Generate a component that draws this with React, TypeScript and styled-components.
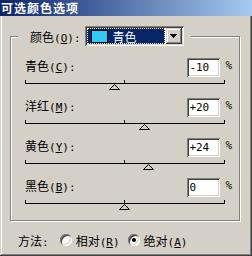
import React from "react";
import styled, { createGlobalStyle } from "styled-components";

interface Channel {
  name: string;
  hotkey: string;
  value: number;
}

const CHANNELS: Channel[] = [
  { name: "青色", hotkey: "C", value: -10 },
  { name: "洋红", hotkey: "M", value: 20 },
  { name: "黄色", hotkey: "Y", value: 24 },
  { name: "黑色", hotkey: "B", value: 0 },
];

// track is 200px wide, value range -100..100, thumb is 11px wide
const TRACK_CENTER = 99;
const THUMB_HALF = 5;

const formatValue = (v: number) => (v > 0 ? `+${v}` : `${v}`);

const GlobalStyle = createGlobalStyle`
  html, body {
    margin: 0;
    padding: 0;
    background: #d4d0c8;
  }
  body {
    font-family: "Noto Sans CJK SC", "DejaVu Sans", sans-serif;
    font-size: 12px;
    color: #000;
  }
`;

const App = () => {
  return (
    <>
      <GlobalStyle />
      <Window>
        <TitleBar>可选颜色选项</TitleBar>
        <Group>
          <Legend>
            <LegendRow>
              <span>
                颜色
                <Hint>
                  (<u>O</u>):
                </Hint>
              </span>
              <Select>
                <SelectValue>
                  <Swatch />
                  <span>青色</span>
                </SelectValue>
                <ArrowButton>
                  <svg width="7" height="4" viewBox="0 0 7 4" shapeRendering="crispEdges">
                    <polygon points="0,0 7,0 3.5,4" fill="#000" />
                  </svg>
                </ArrowButton>
              </Select>
            </LegendRow>
          </Legend>
          {CHANNELS.map((c) => (
            <Row key={c.hotkey}>
              <RowHeader>
                <ChannelLabel>
                  {c.name}
                  <Hint>
                    (<u>{c.hotkey}</u>):
                  </Hint>
                </ChannelLabel>
                <ValueBox>{formatValue(c.value)}</ValueBox>
                <Percent>%</Percent>
              </RowHeader>
              <Track>
                <Thumb style={{ left: TRACK_CENTER - 1 + c.value - THUMB_HALF }}>
                  <svg width="11" height="6" viewBox="0 0 11 6">
                    <polygon
                      points="5.5,0.5 10.5,5.5 0.5,5.5"
                      fill="#d4d0c8"
                      stroke="#000"
                      strokeWidth="1"
                    />
                  </svg>
                </Thumb>
              </Track>
            </Row>
          ))}
        </Group>
        <Footer>
          <span>
            方法<Hint>:</Hint>
          </span>
          <RadioOption $first>
            <Radio />
            <span>
              相对
              <Hint>
                (<u>R</u>)
              </Hint>
            </span>
          </RadioOption>
          <RadioOption>
            <Radio $checked />
            <span>
              绝对
              <Hint>
                (<u>A</u>)
              </Hint>
            </span>
          </RadioOption>
        </Footer>
      </Window>
    </>
  );
};

export default App;

const Window = styled.div`
  width: 252px;
  height: 256px;
  box-sizing: border-box;
  background: #d4d0c8;
  box-shadow: inset -1px -1px 0 #404040, inset 1px 1px 0 #d4d0c8,
    inset -2px -2px 0 #808080, inset 2px 2px 0 #fff;
  overflow: hidden;
`;

const TitleBar = styled.div`
  height: 16px;
  line-height: 16px;
  padding-left: 1px;
  background: linear-gradient(to right, #0a246a, #a6caf0);
  color: #fff;
  font-weight: bold;
  letter-spacing: 1px;
  white-space: nowrap;
`;

const Hint = styled.span`
  font-family: "DejaVu Sans Mono", monospace;
  font-size: 11px;
`;

const Group = styled.fieldset`
  width: 230px;
  box-sizing: border-box;
  min-width: 0;
  margin: 10px 0 0 10px;
  padding: 12px 7px 2px 14px;
  border: 1px solid #808080;
  box-shadow: 1px 1px 0 #fff, inset 1px 1px 0 #fff;
`;

const Legend = styled.legend`
  margin-left: -7px;
  padding: 0 7px 0 12px;
  background: #d4d0c8;
`;

const LegendRow = styled.div`
  display: flex;
  align-items: center;
  gap: 4px;
  height: 20px;
`;

const Select = styled.div`
  display: flex;
  width: 99px;
  height: 20px;
  box-sizing: border-box;
  padding: 2px;
  background: #fff;
  box-shadow: inset 1px 1px 0 #808080, inset -1px -1px 0 #fff,
    inset 2px 2px 0 #404040, inset -2px -2px 0 #d4d0c8;
`;

const SelectValue = styled.div`
  flex: 1;
  display: flex;
  align-items: center;
  gap: 5px;
  margin-right: 1px;
  padding-left: 4px;
  background: #0a246a;
  outline: 1px dotted #ffffc0;
  outline-offset: -1px;
  color: #fff;
`;

const Swatch = styled.span`
  width: 17px;
  height: 13px;
  box-sizing: border-box;
  border: 1px solid #000;
  background: #2ccbf8;
`;

const ArrowButton = styled.div`
  width: 16px;
  height: 16px;
  display: flex;
  align-items: center;
  justify-content: center;
  background: #d4d0c8;
  box-shadow: inset -1px -1px 0 #404040, inset 1px 1px 0 #d4d0c8,
    inset -2px -2px 0 #808080, inset 2px 2px 0 #fff;
`;

const Row = styled.div`
  height: 40px;
`;

const RowHeader = styled.div`
  display: flex;
  align-items: flex-start;
  height: 19px;
`;

const ChannelLabel = styled.span`
  flex: 1;
  line-height: 16px;
`;

const ValueBox = styled.div`
  width: 33px;
  height: 19px;
  box-sizing: border-box;
  padding: 0 2px;
  background: #fff;
  box-shadow: inset 1px 1px 0 #808080, inset -1px -1px 0 #fff,
    inset 2px 2px 0 #404040, inset -2px -2px 0 #d4d0c8;
  font-family: "DejaVu Sans Mono", monospace;
  font-size: 11px;
  line-height: 19px;
`;

const Percent = styled.span`
  margin-left: 5px;
  font-family: "DejaVu Sans Mono", monospace;
  font-size: 11px;
  line-height: 16px;
`;

const Track = styled.div`
  position: relative;
  width: 200px;
  height: 4px;
  box-sizing: border-box;
  margin-top: 3px;
  border: 1px solid #000;
  border-top: none;

  &::before {
    content: "";
    position: absolute;
    left: ${TRACK_CENTER - 1}px;
    top: 0;
    width: 1px;
    height: 3px;
    background: #000;
  }
`;

const Thumb = styled.div`
  position: absolute;
  top: 4px;
  width: 11px;
  height: 6px;
  line-height: 0;
`;

const Footer = styled.div`
  display: flex;
  align-items: center;
  height: 16px;
  margin: 11px 0 0 18px;
`;

const RadioOption = styled.label<{ $first?: boolean }>`
  display: flex;
  align-items: center;
  gap: 4px;
  margin-left: ${(p) => (p.$first ? 11 : 8)}px;
`;

const Radio = styled.span<{ $checked?: boolean }>`
  position: relative;
  width: 12px;
  height: 12px;
  border-radius: 50%;
  background: #fff;
  box-shadow: inset 1px 1px 0 #808080, inset -1px -1px 0 #fff,
    inset 2px 2px 0 #404040, inset -2px -2px 0 #d4d0c8;

  &::after {
    content: "";
    display: ${(p) => (p.$checked ? "block" : "none")};
    position: absolute;
    left: 4px;
    top: 4px;
    width: 4px;
    height: 4px;
    border-radius: 50%;
    background: #000;
  }
`;
